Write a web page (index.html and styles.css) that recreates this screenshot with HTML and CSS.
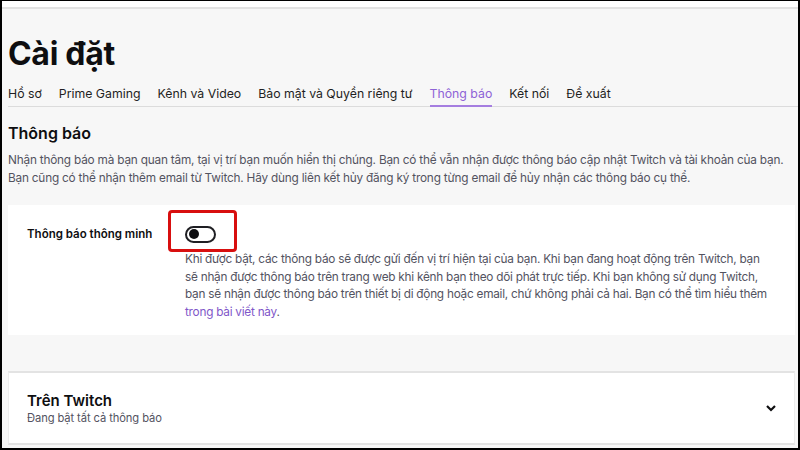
FILE: index.html
```html
<!DOCTYPE html>
<html lang="vi">
<head>
<meta charset="utf-8">
<title>Cài đặt</title>
<link rel="stylesheet" href="styles.css">
</head>
<body>
<div class="frame">
  <div class="topstrip"></div>
  <main class="content">
    <h1 class="title">Cài đặt</h1>
    <nav class="tabs">
      <span class="tab">Hồ sơ</span>
      <span class="tab">Prime Gaming</span>
      <span class="tab">Kênh và Video</span>
      <span class="tab">Bảo mật và Quyền riêng tư</span>
      <span class="tab active">Thông báo</span>
      <span class="tab">Kết nối</span>
      <span class="tab">Đề xuất</span>
    </nav>
    <h2 class="section-title">Thông báo</h2>
    <p class="intro">Nhận thông báo mà bạn quan tâm, tại vị trí bạn muốn hiển thị chúng. Bạn có thể vẫn nhận được thông báo cập nhật Twitch và tài khoản của bạn. Bạn cũng có thể nhận thêm email từ Twitch. Hãy dùng liên kết hủy đăng ký trong từng email để hủy nhận các thông báo cụ thể.</p>

    <section class="card smart">
      <div class="label">Thông báo thông minh</div>
      <div class="toggle-cell">
        <span class="toggle"><span class="knob"></span></span>
        <span class="highlight"></span>
      </div>
      <p class="desc">Khi được bật, các thông báo sẽ được gửi đến vị trí hiện tại của bạn. Khi bạn đang hoạt động trên Twitch, bạn sẽ nhận được thông báo trên trang web khi kênh bạn theo dõi phát trực tiếp. Khi bạn không sử dụng Twitch, bạn sẽ nhận được thông báo trên thiết bị di động hoặc email, chứ không phải cả hai. Bạn có thể tìm hiểu thêm <a class="link">trong bài viết này</a>.</p>
    </section>

    <section class="card collapse">
      <div class="collapse-text">
        <div class="collapse-title">Trên Twitch</div>
        <div class="collapse-sub">Đang bật tất cả thông báo</div>
      </div>
      <svg class="chevron" width="14" height="14" viewBox="0 0 14 14"><path d="M3 5 L7 9 L11 5" fill="none" stroke="#0e0e10" stroke-width="2.2"/></svg>
    </section>
  </main>
</div>
</body>
</html>
```

FILE: styles.css
```css
* { box-sizing: border-box; }
html, body { margin: 0; padding: 0; }
body {
  font-family: Inter, "Noto Sans", sans-serif;
  color: #0e0e10;
  background: #fff;
}
.frame {
  width: 800px;
  height: 450px;
  border: 2px solid #000;
  border-top-width: 1px;
  background: #f7f7f7;
  overflow: hidden;
  display: flex;
  flex-direction: column;
}
.topstrip {
  height: 8px;
  flex: none;
  background: #fff;
  border-bottom: 2px solid #e2e2e2;
}
.content {
  padding: 0 3px 0 6px;
}
.title {
  margin: 25px 0 0;
  font-size: 32px;
  line-height: 40px;
  font-weight: 700;
  letter-spacing: -0.3px;
}
.tabs {
  margin-top: 10px;
  display: flex;
  gap: 17px;
  border-bottom: 1px solid #dcdcdc;
  margin-right: -3px;
}
.tab {
  font-size: 12.3px;
  line-height: 20px;
  padding-bottom: 1px;
  border-bottom: 2px solid transparent;
  margin-bottom: -1px;
  color: #1f1f23;
}
.tab.active {
  color: #8e63d6;
  border-bottom-color: #a57ee0;
}
.section-title {
  margin: 15px 0 0;
  font-size: 16px;
  line-height: 22px;
  font-weight: 600;
}
.intro {
  margin: 7px 0 0;
  font-size: 11.8px;
  letter-spacing: -0.2px;
  line-height: 18px;
  color: #53535f;
  max-width: 784px;
}
.card {
  background: #fff;
  margin-top: 18px;
}
.smart {
  display: grid;
  grid-template-columns: 158px 590px;
  padding: 17px 12px 17px 19px;
  height: 130px;
}
.label {
  font-size: 11.5px;
  font-weight: 600;
  line-height: 18px;
  padding-top: 3px;
}
.toggle-cell {
  position: relative;
  height: 24px;
  display: flex;
  align-items: center;
}
.toggle {
  width: 31px;
  height: 17px;
  border: 2px solid #1f1f23;
  border-radius: 9px;
  display: flex;
  align-items: center;
  padding-left: 2px;
}
.knob {
  width: 10px;
  height: 10px;
  border-radius: 50%;
  background: #0e0e10;
}
.highlight {
  position: absolute;
  left: -17px;
  top: -12px;
  width: 69px;
  height: 42px;
  border: 3px solid #d80f0f;
  border-radius: 4px;
}
.desc {
  grid-column: 2;
  margin: 5px 0 0;
  font-size: 11.8px;
  letter-spacing: -0.25px;
  line-height: 17.5px;
  color: #53535f;
}
.link {
  color: #7f57c9;
}
.collapse {
  margin-top: 36px;
  border-top: 2px solid #e3e3e3;
  border-bottom: 2px solid #e3e3e3;
  border-left: 1px solid #ececec;
  border-right: 1px solid #ececec;
  height: 74px;
  display: flex;
  align-items: center;
  justify-content: space-between;
  padding: 0 16px 0 18px;
}
.collapse-title {
  font-size: 15px;
  font-weight: 600;
  line-height: 19px;
}
.collapse-sub {
  font-size: 11.2px;
  letter-spacing: -0.1px;
  line-height: 16px;
  color: #53535f;
}
.chevron {
  display: block;
}
```
